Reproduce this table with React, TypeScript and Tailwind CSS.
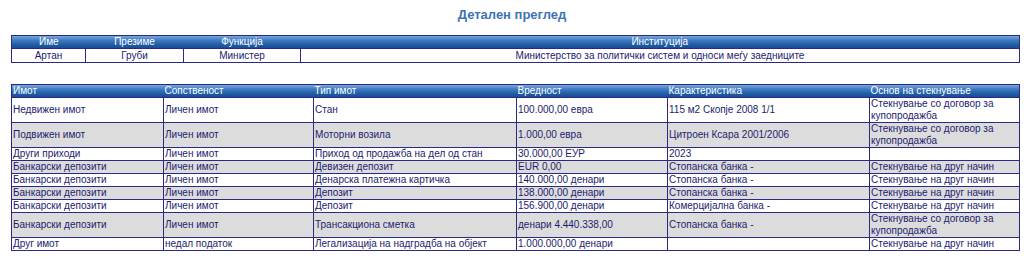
import React from "react";

type Row = {
  imot: string;
  sopstvenost: string;
  tip: string;
  vrednost: string;
  karakteristika: string;
  osnov: string;
};

const rows: Row[] = [
  {
    imot: "Недвижен имот",
    sopstvenost: "Личен имот",
    tip: "Стан",
    vrednost: "100.000,00 евра",
    karakteristika: "115 м2 Скопје 2008 1/1",
    osnov: "Стекнување со договор за купопродажба",
  },
  {
    imot: "Подвижен имот",
    sopstvenost: "Личен имот",
    tip: "Моторни возила",
    vrednost: "1.000,00 евра",
    karakteristika: "Цитроен Ксара 2001/2006",
    osnov: "Стекнување со договор за купопродажба",
  },
  {
    imot: "Други приходи",
    sopstvenost: "Личен имот",
    tip: "Приход од продажба на дел од стан",
    vrednost: "30.000,00 ЕУР",
    karakteristika: "2023",
    osnov: "",
  },
  {
    imot: "Банкарски депозити",
    sopstvenost: "Личен имот",
    tip: "Девизен депозит",
    vrednost: "EUR 0,00",
    karakteristika: "Стопанска банка -",
    osnov: "Стекнување на друг начин",
  },
  {
    imot: "Банкарски депозити",
    sopstvenost: "Личен имот",
    tip: "Денарска платежна картичка",
    vrednost: "140.000,00 денари",
    karakteristika: "Стопанска банка -",
    osnov: "Стекнување на друг начин",
  },
  {
    imot: "Банкарски депозити",
    sopstvenost: "Личен имот",
    tip: "Депозит",
    vrednost: "138.000,00 денари",
    karakteristika: "Стопанска банка -",
    osnov: "Стекнување на друг начин",
  },
  {
    imot: "Банкарски депозити",
    sopstvenost: "Личен имот",
    tip: "Депозит",
    vrednost: "156.900,00 денари",
    karakteristika: "Комерцијална банка -",
    osnov: "Стекнување на друг начин",
  },
  {
    imot: "Банкарски депозити",
    sopstvenost: "Личен имот",
    tip: "Трансакциона сметка",
    vrednost: "денари 4.440.338,00",
    karakteristika: "Стопанска банка -",
    osnov: "Стекнување со договор за купопродажба",
  },
  {
    imot: "Друг имот",
    sopstvenost: "недал податок",
    tip: "Легализација на надградба на објект",
    vrednost: "1.000.000,00 денари",
    karakteristika: "",
    osnov: "Стекнување на друг начин",
  },
];

const headerBg =
  "bg-[linear-gradient(to_bottom,#7aa6dc_0%,#3a78c0_35%,#1f5aa3_70%,#18488a_100%)]";

const cell = "border border-[#2a2a82] pl-[1px] align-middle";

export default function App() {
  return (
    <div
      className="w-[1024px] h-[261px] bg-white text-[10px] leading-[12px] text-[#1c1c6e]"
      style={{ fontFamily: 'Tahoma, "Liberation Sans", Arial, sans-serif' }}
    >
      <div className="pt-[7px] h-[35px] text-center">
        <h1 className="text-[13px] leading-[16px] font-bold text-[#3d74b6]">
          Детален преглед
        </h1>
      </div>

      {/* Official info */}
      <table className="ml-[11px] w-[1009px] table-fixed border-collapse border border-[#2a2a82]">
        <colgroup>
          <col className="w-[74px]" />
          <col className="w-[98px]" />
          <col className="w-[117px]" />
          <col />
        </colgroup>
        <thead>
          <tr className={`${headerBg} text-white h-[13px]`}>
            <th className="font-normal text-center">Име</th>
            <th className="font-normal text-center">Презиме</th>
            <th className="font-normal text-center">Функција</th>
            <th className="font-normal text-center">Институција</th>
          </tr>
        </thead>
        <tbody>
          <tr className="h-[14px]">
            <td className="border border-[#2a2a82] text-center">Артан</td>
            <td className="border border-[#2a2a82] text-center">Груби</td>
            <td className="border border-[#2a2a82] text-center">Министер</td>
            <td className="border border-[#2a2a82] text-center">
              Министерство за политички систем и односи меѓу заедниците
            </td>
          </tr>
        </tbody>
      </table>

      {/* Property */}
      <table className="mt-[21px] ml-[11px] w-[1009px] table-fixed border-collapse border border-[#2a2a82]">
        <colgroup>
          <col className="w-[152px]" />
          <col className="w-[150px]" />
          <col className="w-[203px]" />
          <col className="w-[151px]" />
          <col className="w-[202px]" />
          <col />
        </colgroup>
        <thead>
          <tr className={`${headerBg} text-white h-[12px]`}>
            <th className="font-normal text-left pl-[1px]">Имот</th>
            <th className="font-normal text-left pl-[1px]">Сопственост</th>
            <th className="font-normal text-left pl-[1px]">Тип имот</th>
            <th className="font-normal text-left pl-[1px]">Вредност</th>
            <th className="font-normal text-left pl-[1px]">Карактеристика</th>
            <th className="font-normal text-left pl-[1px]">Основ на стекнување</th>
          </tr>
        </thead>
        <tbody>
          {rows.map((r, i) => (
            <tr
              key={i}
              className={`${i % 2 === 1 ? "bg-[#dcdcdc]" : "bg-white"} h-[13px]`}
            >
              <td className={cell}>{r.imot}</td>
              <td className={cell}>{r.sopstvenost}</td>
              <td className={cell}>{r.tip}</td>
              <td className={cell}>{r.vrednost}</td>
              <td className={cell}>{r.karakteristika}</td>
              <td className={`${cell} pr-[14px]`}>{r.osnov}</td>
            </tr>
          ))}
        </tbody>
      </table>
    </div>
  );
}
